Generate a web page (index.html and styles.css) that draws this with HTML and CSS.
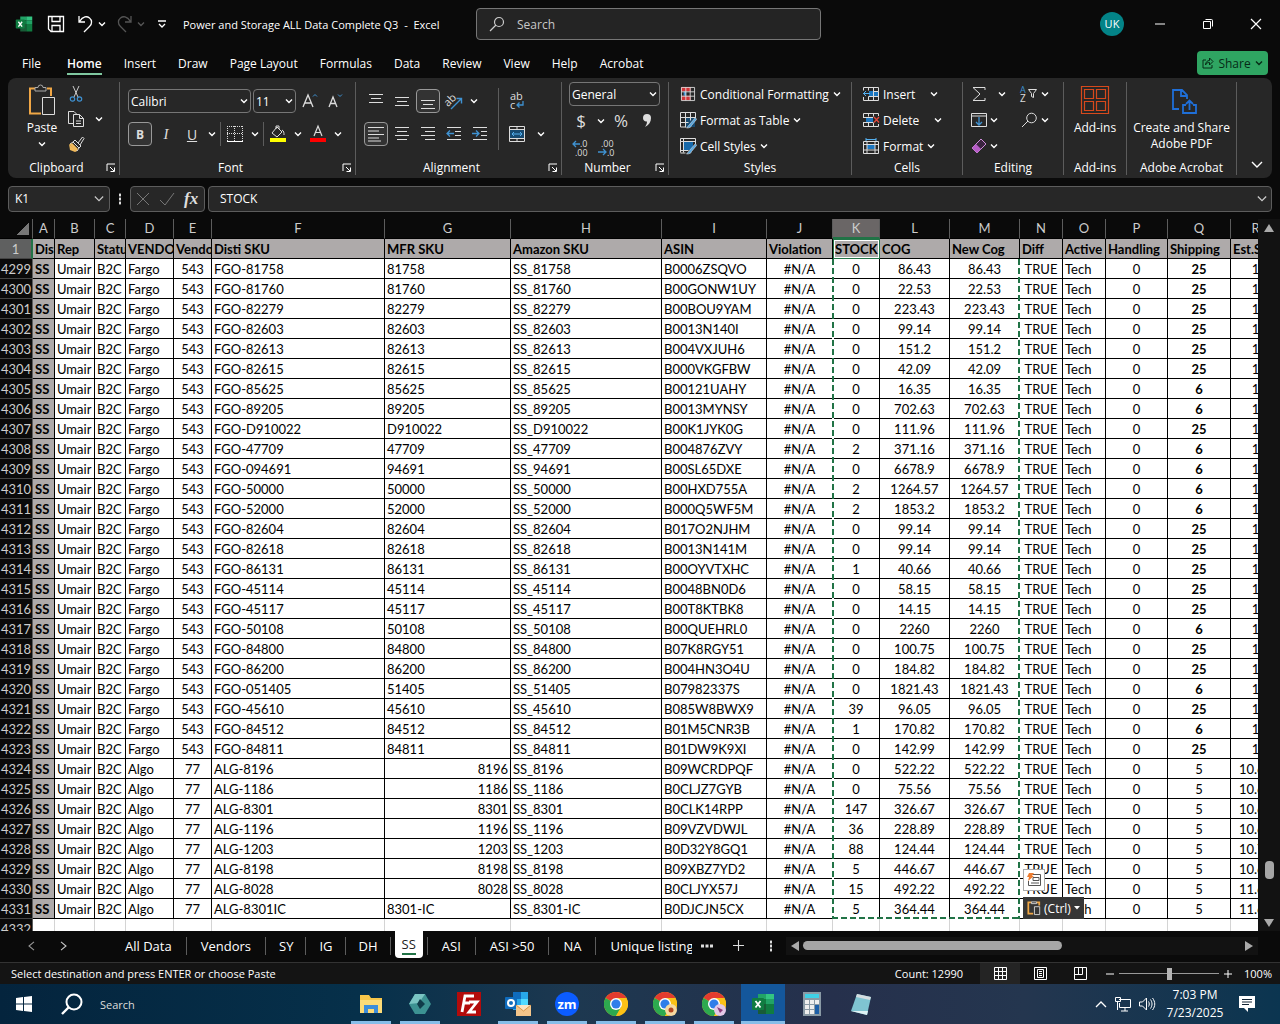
FILE: index.html
```html
<!DOCTYPE html>
<html lang="en">
<head>
  <meta charset="UTF-8" />
  <title>Power and Storage ALL Data Complete Q3 - Excel</title>
  <link rel="stylesheet" href="styles.css">
</head>
<body>

  <!-- shared icons -->
  <svg class="defs" aria-hidden="true">
    <symbol id="caret" viewBox="0 0 8 8"><path d="M1 2.5l3 3 3-3" fill="none" stroke="currentColor" stroke-width="1.4"/></symbol>
    <symbol id="launcher" viewBox="0 0 10 10"><path d="M1 8V1h8M4 4l4 4M8.5 4.500V8.500H4.500" fill="none" stroke="currentColor"/></symbol>
    <symbol id="excel" viewBox="0 0 24 24">
      <path d="M7 2h8v5H7z" fill="#21a366"/><path d="M15 2h8v5h-8z" fill="#33c481"/>
      <path d="M7 7h8v5H7z" fill="#107c41"/><path d="M15 7h8v5h-8z" fill="#21a366"/>
      <path d="M7 12h8v10H7z" fill="#185c37"/><path d="M15 12h8v10h-8z" fill="#107c41"/>
      <rect x="1" y="6" width="12" height="12" rx="1" fill="#107c41"/>
      <path d="M4.500 9l5 6.500M9.500 9l-5 6.500" stroke="#fff" stroke-width="1.800"/>
    </symbol>
    <symbol id="chrome" viewBox="0 0 24 24">
      <circle cx="12" cy="12" r="12" fill="#fbc116"/>
      <path d="M12 12L1.600 6A12 12 0 0 1 22.400 6z" fill="#e33b2e"/>
      <path d="M12 12L1.600 6A12 12 0 0 0 12 24l5.200-9z" fill="#2da94f"/>
      <path d="M12 6h10.400A12 12 0 0 1 12 24l5.200-9z" fill="#fbc116"/>
      <circle cx="12" cy="12" r="6" fill="#fff"/><circle cx="12" cy="12" r="4.600" fill="#2f7de9"/>
    </symbol>
  </svg>

  <header class="titlebar">
    <svg class="app-icon" viewBox="0 0 24 24"><use href="#excel"/></svg>
    <button class="qa save" aria-label="Save"><svg viewBox="0 0 18 18" width="18" height="18"><path d="M1.500 1.500h15v15H4l-2.500-2.500zM5 1.500v5h8v-5M5 16.500v-6h8v6M7 13h0" fill="none" stroke="#fff" stroke-width="1.300"/></svg></button>
    <button class="qa" aria-label="Undo"><svg viewBox="0 0 18 18" width="18" height="18"><path d="M2 1v6h6M2.500 6.500C6 1 10 1 12.500 3s3 6 0 8.500L7 17" fill="none" stroke="#fff" stroke-width="1.300"/></svg><svg class="caret"><use href="#caret"/></svg></button>
    <button class="qa dim" aria-label="Redo"><svg viewBox="0 0 18 18" width="18" height="18"><path d="M15 1v6H9M14.500 6.500C11 1 7 1 4.500 3s-3 6 0 8.500L10 17" fill="none" stroke="currentColor" stroke-width="1.300"/></svg><svg class="caret"><use href="#caret"/></svg></button>
    <button class="qa" aria-label="Customize"><svg viewBox="0 0 10 10" width="10" height="10"><path d="M1 2h8M2 5l3 3 3-3" fill="none" stroke="#fff" stroke-width="1.300"/></svg></button>
    <span class="doc-title">Power and Storage ALL Data Complete Q3 &nbsp;-&nbsp; Excel</span>
    <label class="search">
      <svg viewBox="0 0 16 16" width="16" height="16"><path d="M1 15l6-6" stroke="#ccc" stroke-width="1.200"/><circle cx="10" cy="6" r="4.500" fill="none" stroke="#ccc" stroke-width="1.200"/></svg>
      <input type="text" placeholder="Search" aria-label="Search">
    </label>
    <span class="avatar">UK</span>
    <div class="window-buttons">
      <button aria-label="Minimize"><svg viewBox="0 0 12 12" width="12" height="12"><path d="M1 6h10" stroke="#fff"/></svg></button>
      <button aria-label="Restore"><svg viewBox="0 0 12 12" width="12" height="12"><path d="M1.500 3.500h7v7h-7zM3.500 1.500h6a1 1 0 0 1 1 1v6" fill="none" stroke="#fff"/></svg></button>
      <button aria-label="Close"><svg viewBox="0 0 12 12" width="12" height="12"><path d="M1 1l10 10M11 1L1 11" stroke="#fff" stroke-width="1.200"/></svg></button>
    </div>
  </header>

  <nav class="menu">
    <button class="file">File</button>
    <button class="active">Home</button>
    <button>Insert</button>
    <button>Draw</button>
    <button>Page Layout</button>
    <button>Formulas</button>
    <button>Data</button>
    <button>Review</button>
    <button>View</button>
    <button>Help</button>
    <button>Acrobat</button>
    <button class="share"><svg viewBox="0 0 12 12" width="12" height="12"><path d="M4 3H1v8h9V8M3.500 8c0-3 2-4.500 4-4.500V1L11 4.500 7.500 8V5.500c-2 0-3 .5-4 2.500z" fill="none" stroke="currentColor"/></svg>Share<svg class="caret"><use href="#caret"/></svg></button>
  </nav>

  <section class="ribbon">
    <div class="group clipboard">
      <div class="group-body">
        <button class="big">
          <svg viewBox="0 0 28 32" width="28" height="32"><path d="M7 4.500H2v25h11M19 4.500h4V12" fill="none" stroke="#f0a746" stroke-width="2"/><path d="M7 7V3.500h3a2.500 2.500 0 0 1 5 0h3V7z" fill="#272727" stroke="#aaa"/><path d="M14.500 13.500h12v17h-12z" fill="#272727" stroke="#ddd"/></svg>
          Paste
          <svg class="caret"><use href="#caret"/></svg>
        </button>
        <div class="col">
          <button aria-label="Cut"><svg viewBox="0 0 16 16" width="16" height="16"><path d="M5 0l5 11M11 0L6 11" stroke="#ccc" fill="none"/><circle cx="4.500" cy="13" r="2.200" fill="none" stroke="#3f92d2" stroke-width="1.200"/><circle cx="11.500" cy="13" r="2.200" fill="none" stroke="#3f92d2" stroke-width="1.200"/></svg></button>
          <button class="with-caret" aria-label="Copy"><svg viewBox="0 0 16 16" width="16" height="16"><path d="M5 12.500H.5V.5H6l3 3M5.500 3.500h6l4 4v8h-10zM11.500 3.500v4h4M8 10h5M8 12.500h5" fill="none" stroke="#ddd"/></svg><svg class="caret"><use href="#caret"/></svg></button>
          <button aria-label="Format Painter"><svg viewBox="0 0 16 16" width="16" height="16"><path d="M1 8l8 7-2 1-5-2z" fill="#f0b95a"/><path d="M2 8l7 7 2-3-6-6zM5 6l6 6 2-2-6-6zM10 7l4.500-6L16 2.500 12 9" fill="none" stroke="#ddd"/><path d="M1.500 8.500L4 7l6 6-2 2.500z" fill="#f0b95a"/></svg></button>
        </div>
      </div>
      <div class="group-label shifted">Clipboard<svg class="launcher"><use href="#launcher"/></svg></div>
    </div>

    <div class="group font">
      <div class="group-body lines">
        <div class="line">
          <select class="font-name" aria-label="Font"><option>Calibri</option></select>
          <select class="font-size" aria-label="Font size"><option>11</option></select>
          <button class="tool" aria-label="Increase font size"><svg viewBox="0 0 18 18" width="18" height="18"><path d="M2 15L7 3l5 12M4 11h6" fill="none" stroke="#ddd" stroke-width="1.300"/><path d="M12 4.500l2-2 2 2" fill="none" stroke="#3f92d2"/></svg></button>
          <button class="tool" aria-label="Decrease font size"><svg viewBox="0 0 18 18" width="18" height="18"><path d="M3 15l4-10 4 10M4.500 11.500h5" fill="none" stroke="#ddd" stroke-width="1.300"/><path d="M12 2.500l2 2 2-2" fill="none" stroke="#3f92d2"/></svg></button>
        </div>
        <div class="line">
          <button class="tool on"><b>B</b></button>
          <button class="tool serif"><i>I</i></button>
          <button class="tool under">U</button>
          <button class="drop" aria-label="Underline options"><svg class="caret"><use href="#caret"/></svg></button>
          <span class="sep"></span>
          <button class="tool" aria-label="Borders"><svg viewBox="0 0 16 16" width="16" height="16"><path d="M.5 0v15M15.500 0v15M7.500 0v15M0 .5h16M0 7.500h16" fill="none" stroke="#ddd" stroke-dasharray="1 1"/><path d="M0 15.500h16" stroke="#fff"/></svg></button>
          <button class="drop" aria-label="Border options"><svg class="caret"><use href="#caret"/></svg></button>
          <span class="sep"></span>
          <button class="tool" aria-label="Fill color"><svg viewBox="0 0 16 18" width="16" height="18"><path d="M7 2l5 5-5 5-5-4zM6 4V1h3v3M12 5c2 1 2 3 2 5" fill="none" stroke="#ddd"/><path d="M0 13h16v4H0z" fill="#ff0"/></svg></button>
          <button class="drop" aria-label="Fill options"><svg class="caret"><use href="#caret"/></svg></button>
          <button class="tool" aria-label="Font color"><svg viewBox="0 0 16 18" width="16" height="18"><path d="M4 11l4-10 4 10M5.500 7.500h5" fill="none" stroke="#ddd" stroke-width="1.200"/><path d="M0 13h16v4H0z" fill="#f00"/></svg></button>
          <button class="drop" aria-label="Font color options"><svg class="caret"><use href="#caret"/></svg></button>
        </div>
      </div>
      <div class="group-label shifted">Font<svg class="launcher"><use href="#launcher"/></svg></div>
    </div>

    <div class="group alignment">
      <div class="group-body">
        <div class="lines align-tools">
          <div class="line">
            <button class="tool" aria-label="Top"><svg viewBox="0 0 16 16" width="16" height="16"><path d="M1 1.500h14M3 5.500h10M1 9.500h14" stroke="#ddd"/></svg></button>
            <button class="tool" aria-label="Middle"><svg viewBox="0 0 16 16" width="16" height="16"><path d="M1 4.500h14M3 8.500h10M1 12.500h14" stroke="#ddd"/></svg></button>
            <button class="tool on" aria-label="Bottom"><svg viewBox="0 0 16 16" width="16" height="16"><path d="M1 7.500h14M3 11.500h10M1 15.500h14" stroke="#ddd"/></svg></button>
            <button class="tool" aria-label="Orientation"><svg viewBox="0 0 18 18" width="18" height="18"><path d="M6 17L16 7M11.500 6.500H16.500V11.500" fill="none" stroke="#3f92d2" stroke-width="1.400"/><text x="-1" y="12" transform="rotate(-45 5 9)" font-size="11" fill="#ddd">ab</text></svg></button>
            <button class="drop" aria-label="Orientation options"><svg class="caret"><use href="#caret"/></svg></button>
          </div>
          <div class="line">
            <button class="tool on" aria-label="Left"><svg viewBox="0 0 16 16" width="16" height="16"><path d="M0 1.500h16M0 5h11M0 8.500h16M0 12h11M0 15h13" stroke="#ddd"/></svg></button>
            <button class="tool" aria-label="Center"><svg viewBox="0 0 16 16" width="16" height="16"><path d="M1 1.500h14M3 5.500h10M1 9.500h14M3 13.500h10" stroke="#ddd"/></svg></button>
            <button class="tool" aria-label="Right"><svg viewBox="0 0 16 16" width="16" height="16"><path d="M1 1.500h14M5 5.500h10M1 9.500h14M5 13.500h10" stroke="#ddd"/></svg></button>
            <button class="tool" aria-label="Decrease indent"><svg viewBox="0 0 16 16" width="16" height="16"><path d="M1 1.500h14M9 5.500h6M9 9.500h6M1 13.500h14" stroke="#ddd"/><path d="M8 7.500H1M4 4.500l-3 3 3 3" fill="none" stroke="#3f92d2" stroke-width="1.300"/></svg></button>
            <button class="tool" aria-label="Increase indent"><svg viewBox="0 0 16 16" width="16" height="16"><path d="M1 1.500h14M9 5.500h6M9 9.500h6M1 13.500h14" stroke="#ddd"/><path d="M0 7.500h7M4 4.500l3 3-3 3" fill="none" stroke="#3f92d2" stroke-width="1.300"/></svg></button>
          </div>
        </div>
        <span class="sep tall"></span>
        <div class="lines">
          <div class="line"><button class="tool" aria-label="Wrap text"><svg viewBox="0 0 16 18" width="16" height="18"><text x="1" y="8" font-size="11" fill="#ddd">ab</text><text x="1" y="17" font-size="11" fill="#ddd">c</text><path d="M14 9v4H8M10.500 10.500L8 13l2.500 2.500" fill="none" stroke="#3f92d2" stroke-width="1.300"/></svg></button></div>
          <div class="line"><button class="tool" aria-label="Merge"><svg viewBox="0 0 16 16" width="16" height="16"><path d="M.5.5h15v15H.5zM.5 3.500h15M.5 12.500h15M8 .5v3M8 12.500v3" fill="none" stroke="#ddd"/><path d="M1 4h14v8H1z" fill="#174a70"/><path d="M3 8h10M5 6L3 8l2 2M11 6l2 2-2 2" fill="none" stroke="#55b0ef"/></svg></button><button class="drop wide" aria-label="Merge options"><svg class="caret"><use href="#caret"/></svg></button></div>
        </div>
      </div>
      <div class="group-label shifted">Alignment<svg class="launcher"><use href="#launcher"/></svg></div>
    </div>

    <div class="group number">
      <div class="group-body rows">
        <select class="number-format" aria-label="Number format"><option>General</option></select>
        <div class="line">
          <button class="sym">$</button>
          <button class="drop" aria-label="Currency options"><svg class="caret"><use href="#caret"/></svg></button>
          <button class="sym">%</button>
          <button class="sym" aria-label="Comma style"><svg viewBox="0 0 10 14" width="10" height="14"><path d="M1 4a3.500 3.500 0 0 1 8 0c0 4-2 7-6 9 1-2 2-3 2-5.500C3 8 1 6.500 1 4z" fill="#ddd"/></svg></button>
        </div>
        <div class="line">
          <button class="sym" aria-label="Increase decimal"><svg viewBox="0 0 18 18" width="18" height="18"><path d="M8 5H1M4 2L1 5l3 3" fill="none" stroke="#3f92d2" stroke-width="1.300"/><text x="8" y="8" font-size="9" fill="#ddd">.0</text><text x="3" y="17" font-size="9" fill="#ddd">.00</text></svg></button>
          <button class="sym" aria-label="Decrease decimal"><svg viewBox="0 0 18 18" width="18" height="18"><path d="M0 13h8M5 10l3 3-3 3" fill="none" stroke="#3f92d2" stroke-width="1.300"/><text x="3" y="8" font-size="9" fill="#ddd">.00</text><text x="9" y="17" font-size="9" fill="#ddd">.0</text></svg></button>
        </div>
      </div>
      <div class="group-label shifted">Number<svg class="launcher"><use href="#launcher"/></svg></div>
    </div>

    <div class="group styles">
      <div class="group-body rows">
        <button class="item"><svg viewBox="0 0 16 16" width="16" height="14"><path d="M0 0h11v5H0zM0 10h11v5H0z" fill="#d13438"/><path d="M3 5h3v5H3z" fill="#3f92d2"/><path d="M.5.5h15v15H.5zM5.500.5v15M10.500.5v15M.5 5.500h15M.5 10.500h15" fill="none" stroke="#ddd"/></svg>Conditional Formatting<svg class="caret"><use href="#caret"/></svg></button>
        <button class="item"><svg viewBox="0 0 16 16" width="16" height="16"><path d="M5 5h10v10H5z" fill="#174a70"/><path d="M.5 15V.5h15V6M5.500.5v15M10.500.5v8M.5 5.500h15M.5 10.500h8M.5 15h5" fill="none" stroke="#ddd"/><path d="M15.500 5.500l-6 7-3 3.500c3 0 5-1 5-2.500l5-6z" fill="#55a6e0" stroke="#ddd" stroke-width=".6"/></svg>Format as Table<svg class="caret"><use href="#caret"/></svg></button>
        <button class="item"><svg viewBox="0 0 16 16" width="16" height="16"><path d="M4 4h9v8H4z" fill="#1769aa"/><path d="M.5 14.500V.5h15V6M3.500.5v14M.5 3.500h15M.5 12.500h8M.5 15h5" fill="none" stroke="#ddd"/><path d="M15.500 5.500l-6 7-3 3.500c3 0 5-1 5-2.500l5-6z" fill="#55a6e0" stroke="#ddd" stroke-width=".6"/></svg>Cell Styles<svg class="caret"><use href="#caret"/></svg></button>
      </div>
      <div class="group-label">Styles</div>
    </div>

    <div class="group cells">
      <div class="group-body rows">
        <button class="item"><svg viewBox="0 0 16 14" width="16" height="14"><path d="M6 4h9v5H6z" fill="#1b76c0"/><path d="M.5.5h15v4H10M.5.5v3M.5 10v3.500h15V4.500M5.500.5v3M10.500.5v13M5.500 9.500v4M5.500 9.500h10" fill="none" stroke="#ddd"/><path d="M7 6.500H0M3 4L.5 6.500 3 9" fill="none" stroke="#55b0ef"/></svg><span class="item-text">Insert</span><svg class="caret"><use href="#caret"/></svg></button>
        <button class="item"><svg viewBox="0 0 16 14" width="16" height="14"><path d="M3 4h7v5H3z" fill="#1b76c0"/><path d="M.5 4V.5h15V3M.5 9.500v4h15V11M5.500.5v3M10.500.5v3M5.500 9.500v4M10.500 9.500v4M0 4.500h10M0 9.500h10" fill="none" stroke="#ddd"/><path d="M11 4l5 5.500M16 4l-5 5.500" stroke="#e0483c" stroke-width="1.400"/></svg><span class="item-text far">Delete</span><svg class="caret"><use href="#caret"/></svg></button>
        <button class="item"><svg viewBox="0 0 16 16" width="16" height="16"><path d="M4 6h8v5H4z" fill="#1b76c0"/><path d="M.5 3.500h15v12H.5zM4 3.500v12M12 3.500v12M.5 6.500h15M.5 12h15" fill="none" stroke="#ddd"/><path d="M3 1.500h10M3 0v3M13 0v3" stroke="#55b0ef"/></svg>Format<svg class="caret"><use href="#caret"/></svg></button>
      </div>
      <div class="group-label">Cells</div>
    </div>

    <div class="group editing">
      <div class="group-body">
        <div class="rows">
          <button class="item first" aria-label="AutoSum"><svg viewBox="0 0 16 16" width="16" height="16"><path d="M14 4V1.500H2L9 8l-7 6.500h12V12" fill="none" stroke="#ddd"/></svg><svg class="caret"><use href="#caret"/></svg></button>
          <button class="item" aria-label="Fill"><svg viewBox="0 0 16 14" width="16" height="14"><path d="M.5.5h15v13H.5zM.5 3h15" fill="none" stroke="#ddd"/><path d="M8 4v8M5 9l3 3 3-3" fill="none" stroke="#3f92d2" stroke-width="1.300"/></svg><svg class="caret"><use href="#caret"/></svg></button>
          <button class="item" aria-label="Clear"><svg viewBox="0 0 16 16" width="16" height="16"><path d="M1 10l9-9 5 5-9 9z" fill="#3b2440" stroke="#cf8edb"/><path d="M1 10l4-4 5 5-4 4z" fill="#b65cc6"/></svg><svg class="caret"><use href="#caret"/></svg></button>
        </div>
        <div class="rows">
          <button class="item" aria-label="Sort and Filter"><svg viewBox="0 0 18 18" width="18" height="18"><text x="0" y="8" font-size="9" fill="#3f92d2">A</text><text x="0" y="17" font-size="10" fill="#ddd">Z</text><path d="M8.500 4.500h8l-3 4v4l-2-1v-3z" fill="none" stroke="#ddd"/></svg><svg class="caret"><use href="#caret"/></svg></button>
          <button class="item" aria-label="Find"><svg viewBox="0 0 18 16" width="18" height="16"><path d="M2 15l6-6" stroke="#ddd"/><circle cx="11.500" cy="6" r="4.800" fill="none" stroke="#ddd"/></svg><svg class="caret"><use href="#caret"/></svg></button>
        </div>
      </div>
      <div class="group-label">Editing</div>
    </div>

    <div class="group addins">
      <div class="group-body">
        <button class="big">
          <svg viewBox="0 0 28 32" width="28" height="32"><path d="M.5 2.500h27v27H.5zM3.500 5.500h9v9h-9zM15.500 5.500h9v9h-9zM3.500 17.500h9v9h-9zM15.500 17.500h9v9h-9z" fill="none" stroke="#d8491c" stroke-width="1.200"/></svg>
          Add-ins
        </button>
      </div>
      <div class="group-label">Add-ins</div>
    </div>

    <div class="group acrobat">
      <div class="group-body">
        <button class="big">
          <svg viewBox="0 0 28 32" width="28" height="32"><path d="M11 25H5V6h9l5 5v4M13 6v6h6M18 21h-3v8h13v-8h-3M21.500 26v-9M18 20l3.500-3.500L25 20" fill="none" stroke="#1f6fd8" stroke-width="1.800"/></svg>
          Create and Share<br>Adobe PDF
        </button>
      </div>
      <div class="group-label">Adobe Acrobat</div>
    </div>

    <button class="collapse" aria-label="Collapse ribbon"><svg viewBox="0 0 12 8" width="12" height="8"><path d="M1 1l5 5 5-5" fill="none" stroke="#fff" stroke-width="1.400"/></svg></button>
  </section>

  <section class="formula-bar">
    <div class="box name-box">
      <input type="text" value="K1" aria-label="Name box">
      <svg viewBox="0 0 12 8" width="10" height="8"><path d="M1 1l5 5 5-5" fill="none" stroke="#ccc" stroke-width="1.300"/></svg>
    </div>
    <span class="dots"></span>
    <div class="box fx">
      <svg viewBox="0 0 14 14" width="14" height="14"><path d="M1 1l12 12M13 1L1 13" stroke="#777"/></svg>
      <svg viewBox="0 0 16 14" width="16" height="14"><path d="M1 8l5 5L15 1" fill="none" stroke="#777"/></svg>
      <i>fx</i>
    </div>
    <div class="box formula">
      <input type="text" value="STOCK" aria-label="Formula">
      <svg viewBox="0 0 12 8" width="10" height="8"><path d="M1 1l5 5 5-5" fill="none" stroke="#ccc" stroke-width="1.500"/></svg>
    </div>
  </section>

  <main class="workspace">
    <div class="sheet">
      <table>
        <colgroup>
          <col class="w-head"><col class="w-a"><col class="w-b"><col class="w-c"><col class="w-d"><col class="w-e">
          <col class="w-f"><col class="w-g"><col class="w-h"><col class="w-i"><col class="w-j"><col class="w-k">
          <col class="w-l"><col class="w-l"><col class="w-n"><col class="w-n"><col class="w-p"><col class="w-q"><col class="w-r">
        </colgroup>
        <thead>
          <tr class="letters"><th class="corner"></th><th>A</th><th>B</th><th>C</th><th>D</th><th>E</th><th>F</th><th>G</th><th>H</th><th>I</th><th>J</th><th class="current">K</th><th>L</th><th>M</th><th>N</th><th>O</th><th>P</th><th>Q</th><th>R</th></tr>
          <tr class="titles"><th class="row-no current">1</th><td>Disti</td><td>Rep</td><td>Status</td><td>VENDOR</td><td>Vendor</td><td>Disti SKU</td><td>MFR SKU</td><td>Amazon SKU</td><td>ASIN</td><td>Violation</td><td class="selected">STOCK</td><td>COG</td><td>New Cog</td><td>Diff</td><td>Active</td><td>Handling</td><td>Shipping</td><td>Est.Ship</td></tr>
        </thead>
        <tbody id="rows"></tbody>
      </table>
      <div class="ants"></div>
      <button class="quick" aria-label="Quick analysis"><svg viewBox="0 0 16 16" width="16" height="16"><path d="M5.500 2.500h9v11h-12V9" fill="none" stroke="#555"/><path d="M7 5.500h6v3H7zM5 11h8" fill="none" stroke="#555"/><path d="M3 1h5L6 4h2L2 9l1-4H1z" fill="#ed7d31"/></svg></button>
      <button class="paste-options"><svg viewBox="0 0 16 18" width="14" height="16"><path d="M5 2.500H1.500v13H7M11 2.500h3V6" fill="none" stroke="#f0a746" stroke-width="2"/><path d="M5 4V2h6v2zM8.500 7.500h6v9h-6z" fill="none" stroke="#ddd"/></svg>(Ctrl)<svg viewBox="0 0 6 4" width="6" height="4"><path d="M0 0h6L3 3.500z" fill="#fff"/></svg></button>
    </div>
    <div class="vscroll">
      <svg viewBox="0 0 10 8" width="10" height="8"><path d="M0 8l5-8 5 8z" fill="#aaa"/></svg>
      <div class="vtrack"><div class="vthumb"></div></div>
      <svg viewBox="0 0 10 8" width="10" height="8"><path d="M0 0l5 8 5-8z" fill="#aaa"/></svg>
    </div>
  </main>

  <nav class="tabs">
    <div class="tab-nav">
      <button aria-label="Previous sheet"><svg viewBox="0 0 8 12" width="7" height="10"><path d="M7 1L1 6l6 5" fill="none" stroke="#999" stroke-width="1.300"/></svg></button>
      <button aria-label="Next sheet"><svg viewBox="0 0 8 12" width="7" height="10"><path d="M1 1l6 5-6 5" fill="none" stroke="#ccc" stroke-width="1.300"/></svg></button>
    </div>
    <button class="tab">All Data</button>
    <button class="tab">Vendors</button>
    <button class="tab slim">SY</button>
    <button class="tab slim">IG</button>
    <button class="tab slim">DH</button>
    <button class="tab active"><span>SS</span></button>
    <button class="tab after">ASI</button>
    <button class="tab">ASI &gt;50</button>
    <button class="tab">NA</button>
    <button class="tab clipped">Unique listings</button>
    <button class="more" aria-label="More sheets"><svg viewBox="0 0 12 4" width="12" height="4"><path d="M0 .5h3v3H0zM4.500.5h3v3h-3zM9 .5h3v3H9z" fill="#ddd"/></svg></button>
    <button class="plus" aria-label="New sheet"><svg viewBox="0 0 12 12" width="11" height="11"><path d="M6 0v12M0 6h12" stroke="#ddd" stroke-width="1.200"/></svg></button>
    <span class="dots"></span>
    <div class="hscroll">
      <svg viewBox="0 0 8 10" width="8" height="10"><path d="M8 0L0 5l8 5z" fill="#aaa"/></svg>
      <div class="htrack"><div class="hthumb"></div></div>
      <svg viewBox="0 0 8 10" width="8" height="10"><path d="M0 0l8 5-8 5z" fill="#aaa"/></svg>
    </div>
  </nav>

  <footer class="status">
    <span>Select destination and press ENTER or choose Paste</span>
    <span class="count">Count: 12990</span>
    <button class="view on" aria-label="Normal"><svg viewBox="0 0 13 13" width="13" height="13"><path d="M.5.5h12v12H.5zM4.500.5v12M8.500.5v12M.5 4.500h12M.5 8.500h12" fill="none" stroke="#fff"/></svg></button>
    <button class="view" aria-label="Page layout"><svg viewBox="0 0 13 13" width="13" height="13"><path d="M.5.5h12v12H.5zM3.500 2.500h6v8h-6zM5 4.500h3M5 6.500h3M5 8.500h3" fill="none" stroke="#fff"/></svg></button>
    <button class="view" aria-label="Page break"><svg viewBox="0 0 13 13" width="13" height="13"><path d="M.5.5h12v12H.5zM4.500.5v7M8.500.5v7M.5 7.500h8" fill="none" stroke="#fff"/></svg></button>
    <div class="zoom">
      <button aria-label="Zoom out"><svg viewBox="0 0 8 8" width="8" height="8"><path d="M0 4h8" stroke="#fff"/></svg></button>
      <input type="range" min="0" max="100" value="50" aria-label="Zoom">
      <button aria-label="Zoom in"><svg viewBox="0 0 8 8" width="8" height="8"><path d="M0 4h8M4 0v8" stroke="#fff"/></svg></button>
    </div>
    <span class="percent">100%</span>
  </footer>

  <div class="taskbar">
    <button class="start" aria-label="Start"><svg viewBox="0 0 16 16" width="16" height="16"><path d="M0 2l7-1v6.500H0zM8 1l8-1v7.500H8zM0 8.500h7V15l-7-1zM8 8.500h8V16l-8-1z" fill="#fff"/></svg></button>
    <button class="os-search"><svg viewBox="0 0 22 22" width="22" height="22"><circle cx="13" cy="9" r="7.500" fill="none" stroke="#fff" stroke-width="2"/><path d="M8 14l-7 7" stroke="#fff" stroke-width="2.400"/></svg>Search</button>
    <div class="apps">
      <button class="app open" aria-label="File Explorer"><svg viewBox="0 0 24 24" width="24" height="24"><path d="M1 3h9l2 3h11v15H1z" fill="#f7c64a"/><path d="M1 8h22v13H1z" fill="#fddc78"/><path d="M5 21v-8h14v8h-4v-4H9v4z" fill="#3d8edb"/></svg></button>
      <button class="app open" aria-label="Hex app"><svg viewBox="0 0 24 24" width="24" height="24"><path d="M7 2h10l6 10-6 10H7L1 12z" fill="#3c9292"/><path d="M7 2h10l-6 9-10 1z" fill="#7ac4c2"/><path d="M12 7l5 5-5 5-3-5z" fill="#103c4a"/></svg></button>
      <button class="app" aria-label="FileZilla"><svg viewBox="0 0 24 24" width="24" height="24"><path d="M0 0h24v24H0z" fill="#b30b0b"/><path d="M5 20L8 4h9M7 11h6M12 10h8l-8 10h7" fill="none" stroke="#fff" stroke-width="2.800"/></svg></button>
      <button class="app open" aria-label="Outlook"><svg viewBox="0 0 26 26" width="26" height="26"><path d="M8 1h15v18H8z" fill="#28a8ea"/><path d="M8 1h8v7H8z" fill="#0f6cbd"/><path d="M16 8h7v7h-7z" fill="#50d9ff"/><rect y="6" width="12" height="12" rx="1" fill="#0f6cbd"/><circle cx="6" cy="12" r="3" fill="none" stroke="#fff" stroke-width="2"/><path d="M11 14h15v11H11z" fill="#f4c58a"/><path d="M11 14l7.500 6 7.500-6" fill="#fbe3c2" stroke="#d99747"/></svg></button>
      <button class="app open zoom-app">zm</button>
      <button class="app open" aria-label="Chrome"><svg viewBox="0 0 24 24" width="24" height="24"><use href="#chrome"/></svg></button>
      <button class="app open" aria-label="Chrome profile 1"><svg viewBox="0 0 24 24" width="24" height="24"><use href="#chrome"/><circle cx="18" cy="18" r="6" fill="#f6d9a0"/><circle cx="18" cy="18" r="2.500" fill="#b5461e"/></svg></button>
      <button class="app open" aria-label="Chrome profile 2"><svg viewBox="0 0 24 24" width="24" height="24"><use href="#chrome"/><circle cx="18" cy="18" r="6" fill="#e3c8e6"/><path d="M15 15l6 3-3 3z" fill="#8c3a78"/></svg></button>
      <button class="app open current" aria-label="Excel"><svg viewBox="0 0 24 24" width="24" height="24"><use href="#excel"/></svg></button>
      <button class="app" aria-label="Calculator"><svg viewBox="0 0 20 24" width="20" height="24"><path d="M1 0h18v24H1z" fill="#8a9aa5"/><path d="M3 2h14v4H3z" fill="#3fd0e6"/><path d="M3 8h4v4H3zM8 8h4v4H8zM13 8h4v4h-4zM3 13h4v4H3zM8 13h4v4H8zM3 18h4v4H3zM8 18h4v4H8z" fill="#eee"/><path d="M13 13h4v9h-4z" fill="#1d5fa8"/></svg></button>
      <button class="app" aria-label="Notepad"><svg viewBox="0 0 24 24" width="24" height="24"><path d="M8 2l14 3-4 18-16-4z" fill="#7fc4d1"/><path d="M8 2l14 3-1 3L7 5z" fill="#d5dde0"/><path d="M2 19l16 4 1-4z" fill="#dff2f4"/></svg></button>
    </div>
    <div class="tray">
      <svg viewBox="0 0 12 8" width="12" height="8"><path d="M1 7l5-5 5 5" fill="none" stroke="#fff" stroke-width="1.300"/></svg>
      <svg viewBox="0 0 16 16" width="16" height="16"><path d="M4 3.500h11.500v8H4.500V7M10 12v3M6 15h7M.5 1.500h5v4h-5zM2.500 5.500V14" fill="none" stroke="#fff"/></svg>
      <svg viewBox="0 0 16 16" width="16" height="16"><path d="M.5 6h3l4-4v12l-4-4h-3zM9.500 5.500c1 1.500 1 3.500 0 5M11.500 3.500c2 3 2 6 0 9M13.500 2c3 4 3 8 0 12" fill="none" stroke="#fff"/></svg>
      <div class="clock">7:03 PM<br>7/23/2025</div>
      <svg viewBox="0 0 16 16" width="16" height="16"><path d="M0 0h16v12H9v4l-4-4H0z" fill="#fff"/><path d="M3 3.500h10M3 6h10M3 8.500h7" stroke="#123"/></svg>
    </div>
  </div>

  <script>
    // [disti sku, mfr sku, asin, stock, cog, shipping]
    const fargo = [
      ['81758', '81758', 'B0006ZSQVO', 0, '86.43', 25],
      ['81760', '81760', 'B00GONW1UY', 0, '22.53', 25],
      ['82279', '82279', 'B00BOU9YAM', 0, '223.43', 25],
      ['82603', '82603', 'B0013N140I', 0, '99.14', 25],
      ['82613', '82613', 'B004VXJUH6', 0, '151.2', 25],
      ['82615', '82615', 'B000VKGFBW', 0, '42.09', 25],
      ['85625', '85625', 'B00121UAHY', 0, '16.35', 6],
      ['89205', '89205', 'B0013MYNSY', 0, '702.63', 6],
      ['D910022', 'D910022', 'B00K1JYK0G', 0, '111.96', 25],
      ['47709', '47709', 'B004876ZVY', 2, '371.16', 6],
      ['094691', '94691', 'B00SL65DXE', 0, '6678.9', 6],
      ['50000', '50000', 'B00HXD755A', 2, '1264.57', 6],
      ['52000', '52000', 'B000Q5WF5M', 2, '1853.2', 6],
      ['82604', '82604', 'B017O2NJHM', 0, '99.14', 25],
      ['82618', '82618', 'B0013N141M', 0, '99.14', 25],
      ['86131', '86131', 'B00OYVTXHC', 1, '40.66', 25],
      ['45114', '45114', 'B0048BN0D6', 0, '58.15', 25],
      ['45117', '45117', 'B00T8KTBK8', 0, '14.15', 25],
      ['50108', '50108', 'B00QUEHRL0', 0, '2260', 6],
      ['84800', '84800', 'B07K8RGY51', 0, '100.75', 25],
      ['86200', '86200', 'B004HN3O4U', 0, '184.82', 25],
      ['051405', '51405', 'B07982337S', 0, '1821.43', 6],
      ['45610', '45610', 'B085W8BWX9', 39, '96.05', 25],
      ['84512', '84512', 'B01M5CNR3B', 1, '170.82', 6],
      ['84811', '84811', 'B01DW9K9XI', 0, '142.99', 25]
    ];
    // [disti sku, mfr sku, asin, stock, cog, est. shipping]
    const algo = [
      ['8196', '8196', 'B09WCRDPQF', 0, '522.22', '10.60'],
      ['1186', '1186', 'B0CLJZ7GYB', 0, '75.56', '10.60'],
      ['8301', '8301', 'B0CLK14RPP', 147, '326.67', '10.60'],
      ['1196', '1196', 'B09VZVDWJL', 36, '228.89', '10.60'],
      ['1203', '1203', 'B0D32Y8GQ1', 88, '124.44', '10.70'],
      ['8198', '8198', 'B09XBZ7YD2', 5, '446.67', '10.60'],
      ['8028', '8028', 'B0CLJYX57J', 15, '492.22', '11.60'],
      ['8301IC', '8301-IC', 'B0DJCJN5CX', 5, '364.44', '11.60']
    ];

    let no = 4299;
    let html = '';

    function addRow(vendor, code, sku, mfr, asin, stock, cog, shipping, est, numeric) {
      html += `<tr><th class="row-no">${no++}</th><td class="dist">SS</td><td>Umair</td><td>B2C</td><td>${vendor}</td>
        <td class="c">${code}</td><td>${sku}</td><td class="${numeric ? 'r' : ''}">${mfr}</td><td>SS_${mfr}</td><td>${asin}</td>
        <td class="c">#N/A</td><td class="c">${stock}</td><td class="c">${cog}</td><td class="c">${cog}</td><td class="c">TRUE</td>
        <td>Tech</td><td class="c">0</td><td class="c">${shipping}</td><td class="c">${est}</td></tr>`;
    }

    fargo.forEach(f => addRow('Fargo', 543, 'FGO-' + f[0], f[1], f[2], f[3], f[4], `<b>${f[5]}</b>`, 1, false));
    algo.forEach(a => addRow('Algo', 77, 'ALG-' + a[0], a[1], a[2], a[3], a[4], 5, a[5], !a[1].includes('-')));
    html += `<tr class="empty"><th class="row-no">${no}</th>${'<td></td>'.repeat(18)}</tr>`;

    document.getElementById('rows').innerHTML = html;
  </script>

</body>
</html>
```
FILE: styles.css
```css
* {
  box-sizing: border-box;
}
body {
  margin: 0;
  height: 100vh;
  display: flex;
  flex-direction: column;
  overflow: hidden;
  background-color: #0a0a0a;
  color: white;
  font-family: "Open Sans", "Noto Sans", sans-serif;
  font-size: 12px;
}
button, input, select {
  font: inherit;
  color: inherit;
  background: none;
  border: none;
  padding: 0;
  margin: 0;
  outline: none;
}
button {
  display: flex;
  align-items: center;
  justify-content: center;
  white-space: nowrap;
}
svg {
  display: block;
  flex-shrink: 0;
  overflow: visible;
}
.defs {
  position: absolute;
  width: 0;
  height: 0;
}
.caret {
  width: 8px;
  height: 8px;
}

/* title bar */
.titlebar {
  display: flex;
  align-items: center;
  height: 48px;
  padding-left: 15px;
  flex-shrink: 0;
}
.app-icon {
  width: 18px;
  height: 18px;
}
.qa {
  gap: 3px;
  margin-left: 12px;
}
.qa.save {
  margin-left: 14px;
}
.qa.dim {
  color: #555;
  margin-left: 10px;
}
.doc-title {
  width: 309px;
  padding-left: 16px;
  font-size: 11px;
  white-space: nowrap;
}
.search {
  display: flex;
  align-items: center;
  gap: 12px;
  width: 345px;
  height: 32px;
  padding-left: 12px;
  border: 1px solid #767676;
  border-radius: 4px;
  background-color: #242424;
}
.search input {
  flex: 1;
  font-size: 12px;
}
.search input::placeholder {
  color: #c8c8c8;
}
.avatar {
  width: 24px;
  height: 24px;
  margin-left: auto;
  border-radius: 50%;
  background-color: #038387;
  font-size: 11px;
  line-height: 24px;
  text-align: center;
}
.window-buttons {
  display: flex;
  padding-left: 12px;
}
.window-buttons button {
  width: 48px;
  height: 48px;
}

/* menu */
.menu {
  display: flex;
  align-items: center;
  gap: 22px;
  height: 30px;
  padding: 0 12px 0 22px;
  flex-shrink: 0;
}
.menu button {
  height: 24px;
}
.menu .file {
  margin-right: 4px;
}
.menu .active {
  font-weight: 600;
  border-bottom: 2px solid #7fc8a0;
  border-top: 2px solid transparent;
}
.menu .share {
  gap: 4px;
  width: 71px;
  margin-left: auto;
  background-color: #2fa562;
  border-radius: 4px;
  color: #062b16;
}

/* ribbon */
.ribbon {
  display: flex;
  height: 100px;
  margin: 0 8px;
  padding: 4px 0 3px;
  border-radius: 8px;
  background-color: #272727;
  flex-shrink: 0;
}
.group {
  display: flex;
  flex-direction: column;
  border-right: 1px solid #5c5c5c;
  padding: 0 8px;
  flex-shrink: 0;
}
.group-body {
  display: flex;
  flex: 1;
}
.group-label {
  position: relative;
  height: 14px;
  line-height: 14px;
  text-align: center;
}
.group-label.shifted {
  padding-right: 14px;
}
.launcher {
  position: absolute;
  right: -5px;
  top: 2px;
  width: 10px;
  height: 10px;
}
.clipboard { width: 112px; }
.font { width: 236px; }
.alignment { width: 206px; }
.number { width: 107px; }
.styles { width: 183px; }
.cells { width: 111px; }
.editing { width: 101px; }
.addins { width: 63px; }
.acrobat { width: 110px; }
.group.addins, .group.acrobat {
  padding: 0;
}
.big {
  flex: 1;
  flex-direction: column;
  justify-content: flex-start;
  padding-top: 2px;
  line-height: 16px;
  white-space: normal;
}
.clipboard .big {
  flex: none;
  width: 52px;
}
.clipboard .big .caret {
  margin-top: 4px;
}
.big > svg:first-child {
  margin-bottom: 4px;
}
.col {
  display: flex;
  flex-direction: column;
  align-items: flex-start;
  gap: 9px;
  padding-top: 4px;
}
.with-caret {
  gap: 11px;
}
.lines {
  display: flex;
  flex-direction: column;
  gap: 9px;
  padding-top: 7px;
}
.line {
  display: flex;
  align-items: center;
  gap: 2px;
  height: 24px;
}
.tool {
  width: 24px;
  height: 24px;
  color: #ddd;
}
.tool.on {
  border: 1px solid #999;
  border-radius: 4px;
  background-color: #333;
}
.serif {
  font-family: "Liberation Serif", serif;
  font-size: 15px;
}
.under {
  text-decoration: underline;
  font-size: 14px;
}
.drop {
  width: 12px;
  height: 24px;
}
.drop.wide {
  width: 20px;
}
.sep {
  width: 1px;
  height: 24px;
  background-color: #5c5c5c;
}
.sep.tall {
  height: 62px;
  margin: 6px 6px 0 3px;
}
.align-tools {
  width: 131px;
}
select {
  height: 24px;
  padding-left: 2px;
  border: 1px solid #767676;
  border-radius: 4px;
  appearance: none;
  flex-shrink: 0;
  background: #272727 url("data:image/svg+xml,%3Csvg xmlns='http://www.w3.org/2000/svg' viewBox='0 0 8 8'%3E%3Cpath d='M1 2.5l3 3 3-3' fill='none' stroke='white' stroke-width='1.4'/%3E%3C/svg%3E") no-repeat right 2px center / 8px 8px;
}
.font-name { width: 123px; }
.font-size { width: 43px; }
.number-format { width: 91px; }
.rows {
  display: flex;
  flex-direction: column;
  gap: 2px;
}
.sym {
  width: 24px;
  height: 24px;
  font-size: 17px;
  color: #ddd;
}
.number {
  padding: 0 8px 0 7px;
}
.number .line {
  height: 25px;
}
.item {
  height: 24px;
  gap: 4px;
  justify-content: flex-start;
}
.styles .rows, .cells .rows {
  padding-left: 3px;
}
.item-text {
  width: 43px;
  text-align: left;
}
.item-text.far {
  width: 47px;
}
.editing .group-body {
  gap: 14px;
}
.editing .item.first {
  gap: 11px;
}
.editing .item {
  gap: 3px;
}
.collapse {
  flex: 1;
  align-items: flex-end;
  padding: 0 0 6px 4px;
}

/* formula bar */
.formula-bar {
  display: flex;
  align-items: center;
  height: 41px;
  padding: 0 8px;
  flex-shrink: 0;
}
.box {
  display: flex;
  align-items: center;
  height: 26px;
  border: 1px solid #5c5c5c;
  border-radius: 4px;
  background-color: #272727;
}
.box input {
  flex: 1;
  min-width: 0;
}
.name-box {
  width: 102px;
  padding: 0 5px 0 6px;
}
.dots {
  width: 2px;
  height: 12px;
  background: radial-gradient(circle, #ddd 1px, transparent 2px) 0 0 / 2px 4px;
}
.formula-bar .dots {
  margin: 0 9px;
}
.fx {
  width: 75px;
  gap: 9px;
  padding-left: 5px;
}
.fx i {
  font: italic bold 17px "Liberation Serif", serif;
  color: #ddd;
}
.formula {
  flex: 1;
  margin-left: 3px;
  padding: 0 4px 0 11px;
}

/* sheet */
.workspace {
  display: flex;
  flex: 1;
  min-height: 0;
}
.sheet {
  position: relative;
  flex: 1;
  min-width: 0;
  overflow: hidden;
}
table {
  width: 1px;
  table-layout: fixed;
  border-collapse: separate;
  border-spacing: 0;
  font-family: Lato, "Open Sans", sans-serif;
  font-size: 13px;
  line-height: 17px;
}
.w-head { width: 33px; }
.w-a { width: 22px; }
.w-b { width: 40px; }
.w-c { width: 31px; }
.w-d { width: 48px; }
.w-e { width: 38px; }
.w-f { width: 173px; }
.w-g { width: 126px; }
.w-h { width: 151px; }
.w-i { width: 105px; }
.w-j { width: 66px; }
.w-k { width: 47px; }
.w-l { width: 70px; }
.w-n { width: 43px; }
.w-p { width: 62px; }
.w-q { width: 63px; }
.w-r { width: 50px; }
td, th {
  height: 20px;
  padding: 2px 2px 0;
  overflow: hidden;
  white-space: nowrap;
  border-right: 1px solid black;
  border-bottom: 1px solid black;
}
td {
  background-color: white;
  color: black;
}
th {
  font-weight: normal;
  color: #ccc;
  background-color: #0a0a0a;
  border-right-color: #5c5c5c;
}
.letters th {
  padding-top: 0;
}
.letters .current {
  background-color: #6a6666;
  border-bottom: 2px solid #217346;
}
.letters .corner {
  background: linear-gradient(135deg, transparent 50%, #777 50%) no-repeat right 3px bottom 3px / 12px 12px;
}
.row-no {
  padding: 2px 1px 0;
  border-bottom-color: #444;
}
.row-no.current {
  background-color: #5f6060;
  border-right: 2px solid #217346;
}
.titles td {
  font-weight: bold;
  background-color: #aeaaaa;
}
.titles .selected {
  border: 1px solid #217346;
  box-shadow: inset 0 0 0 1px white;
  padding: 1px 1px 0;
}
.dist {
  font-weight: bold;
}
td.dist {
  background-color: #aeaaaa;
}
.c {
  text-align: center;
}
.r {
  text-align: right;
}
.empty td {
  border-color: #d4d4d4;
}
/* copied range marquee */
.ants {
  position: absolute;
  left: 832px;
  top: 40px;
  width: 188px;
  height: 660px;
  background:
    repeating-linear-gradient(#217346 0 6px, white 6px 9px) left / 2px 100% no-repeat,
    repeating-linear-gradient(#217346 0 6px, white 6px 9px) right / 2px 100% no-repeat,
    repeating-linear-gradient(90deg, #217346 0 6px, white 6px 9px) bottom / 100% 2px no-repeat;
}
.quick {
  position: absolute;
  left: 1023px;
  top: 650px;
  width: 22px;
  height: 22px;
  border: 1px solid #aaa;
  background-color: white;
}
.paste-options {
  position: absolute;
  left: 1023px;
  top: 678px;
  width: 61px;
  height: 22px;
  gap: 3px;
  background-color: #363636;
}
.vscroll {
  display: flex;
  flex-direction: column;
  align-items: center;
  width: 22px;
  padding: 5px 0 4px;
  background-color: #121212;
}
.vtrack {
  display: flex;
  flex: 1;
  align-items: flex-end;
  padding-bottom: 40px;
}
.vthumb {
  width: 9px;
  height: 18px;
  border-radius: 4px;
  background-color: #a6a6a6;
}

/* sheet tabs */
.tabs {
  display: flex;
  align-items: center;
  height: 31px;
  padding: 0 22px 2px 0;
  font-size: 13px;
  flex-shrink: 0;
}
.tab-nav {
  display: flex;
  gap: 25px;
  width: 111px;
  padding-left: 28px;
}
.tab {
  height: 18px;
  padding: 0 14px;
  border-right: 1px solid #5c5c5c;
}
.tab.slim {
  padding: 0 12px 0 13px;
}
.tab.active {
  height: 27px;
  align-self: flex-start;
  margin: 0 4px;
  padding: 0 7px;
  background-color: white;
  color: #222;
  border: none;
  border-radius: 0 0 4px 4px;
}
.tab.active span {
  line-height: 18px;
  border-bottom: 2px solid #217346;
}
.tab.after {
  border-left: 1px solid #5c5c5c;
  padding: 0 14px;
}
.tab.clipped {
  width: 96px;
  justify-content: flex-start;
  padding-right: 0;
  border: none;
  overflow: hidden;
}
.more {
  margin-left: 9px;
}
.plus {
  margin: 0 26px 0 20px;
}
.hscroll {
  display: flex;
  align-items: center;
  flex: 1;
  height: 18px;
  margin-left: 14px;
  padding: 0 5px;
  background-color: #121212;
}
.htrack {
  flex: 1;
}
.hthumb {
  width: 58%;
  height: 9px;
  margin-left: 4px;
  border-radius: 5px;
  background-color: #a6a6a6;
}

/* status bar */
.status {
  display: flex;
  align-items: center;
  height: 22px;
  padding: 0 8px 0 11px;
  border-top: 1px solid #333;
  background-color: #141414;
  font-size: 11px;
  flex-shrink: 0;
}
.count {
  margin-left: auto;
  margin-right: 17px;
}
.view {
  width: 40px;
  height: 21px;
}
.view.on {
  background-color: #242424;
}
.zoom {
  display: flex;
  align-items: center;
  gap: 5px;
  margin-left: 6px;
}
.zoom input {
  width: 100px;
  height: 12px;
  appearance: none;
  background: linear-gradient(#999, #999) center / 100% 1px no-repeat;
}
.zoom input::-webkit-slider-thumb {
  appearance: none;
  width: 5px;
  height: 12px;
  background-color: #b5b5b5;
}
.percent {
  width: 40px;
  text-align: right;
}

/* windows taskbar */
.taskbar {
  display: flex;
  align-items: center;
  height: 40px;
  background: linear-gradient(90deg, #04243d, #06304a 28%, #1d3850 45%, #26304c 65%, #24364f 80%, #0b3550);
  flex-shrink: 0;
}
.start {
  width: 48px;
  height: 40px;
}
.os-search {
  gap: 17px;
  width: 301px;
  justify-content: flex-start;
  padding-left: 13px;
  color: #ddd;
  font-size: 11px;
}
.apps {
  display: flex;
  gap: 5px;
}
.app {
  width: 44px;
  height: 40px;
  border-top: 3px solid transparent;
  border-bottom: 3px solid transparent;
}
.app.open {
  background: linear-gradient(#86bde8, #86bde8) center bottom / 40px 3px no-repeat border-box;
}
.app.current {
  border-bottom-color: #86bde8;
  background: #14579b border-box;
}
.zoom-app {
  position: relative;
  z-index: 0;
  font-size: 13px;
  font-weight: bold;
}
.zoom-app::before {
  content: "";
  position: absolute;
  z-index: -1;
  inset: 5px 10px;
  border-radius: 50%;
  background-color: #0b5cff;
}
.tray {
  display: flex;
  align-items: center;
  gap: 8px;
  margin-left: auto;
  padding-right: 25px;
}
.clock {
  width: 64px;
  margin-right: 4px;
  line-height: 18px;
  text-align: center;
}
```
